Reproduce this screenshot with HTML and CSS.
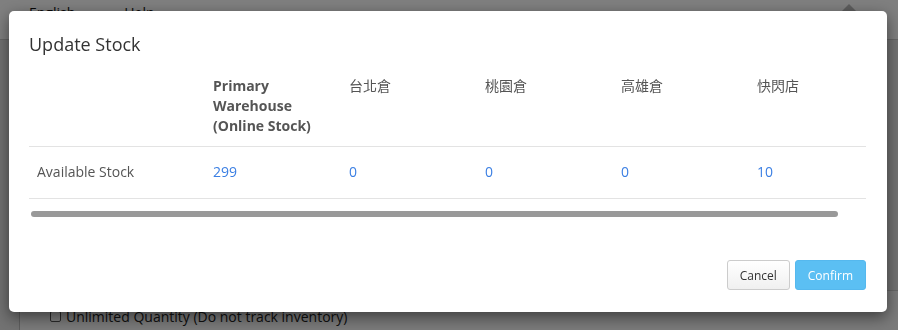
FILE: index.html
```html
<!DOCTYPE html>
<html>
<head>
  <title>Update Stock</title>
  <link rel="stylesheet" href="styles.css">
</head>
<body>
  <div class="page">
    <div class="topbar">
      <span class="topbar-link">English</span>
      <span class="topbar-link">Help</span>
      <span class="topbar-caret"></span>
    </div>
    <div class="page-main">
      <div class="panel">
        <label class="check-row"><span class="check-box"></span>Unlimited Quantity (Do not track inventory)</label>
      </div>
    </div>
  </div>

  <div class="backdrop"></div>

  <div class="modal-wrap">
    <div class="modal">
      <div class="modal-header">
        <h4 class="modal-title">Update Stock</h4>
      </div>
      <div class="modal-body">
        <div class="table-scroll">
          <table class="stock-table">
            <thead>
              <tr>
                <th class="col-label"></th>
                <th>Primary Warehouse (Online Stock)</th>
                <th class="cjk">台北倉</th>
                <th class="cjk">桃園倉</th>
                <th class="cjk">高雄倉</th>
                <th class="cjk">快閃店</th>
              </tr>
            </thead>
            <tbody>
              <tr>
                <td class="col-label">Available Stock</td>
                <td><a class="qty">299</a></td>
                <td><a class="qty">0</a></td>
                <td><a class="qty">0</a></td>
                <td><a class="qty">0</a></td>
                <td><a class="qty">10</a></td>
              </tr>
            </tbody>
          </table>
        </div>
        <div class="scroll-track">
          <div class="scroll-thumb"></div>
        </div>
      </div>
      <div class="modal-footer">
        <button class="btn btn-default">Cancel</button>
        <button class="btn btn-primary">Confirm</button>
      </div>
    </div>
  </div>
</body>
</html>
```

FILE: styles.css
```css
html, body {
  margin: 0;
  height: 100%;
  overflow: hidden;
}
body {
  font-family: "Open Sans", "Noto Sans CJK TC", sans-serif;
  font-size: 14px;
  color: #333;
  background: #e4e4e4;
}

/* page behind the dialog */
.page {
  height: 100%;
  display: flex;
  flex-direction: column;
  overflow: hidden;
}
.topbar {
  height: 39px;
  flex-shrink: 0;
  background: #fff;
  border-bottom: 1px solid #ccc;
  display: flex;
  align-items: flex-start;
  padding-left: 29px;
  gap: 49px;
}
.topbar-link {
  color: #111;
  font-size: 14px;
  line-height: 20px;
  margin-top: 3px;
}
.topbar-caret {
  margin-left: auto;
  margin-right: 42px;
  margin-top: 4px;
  width: 0;
  height: 0;
  border-left: 7px solid transparent;
  border-right: 7px solid transparent;
  border-bottom: 7px solid #bbb;
}
.page-main {
  flex-grow: 1;
  min-height: 0;
  display: flex;
  flex-direction: column;
  padding: 250px 0 0 19px;
}
.panel {
  flex-grow: 1;
  background: #f4f4f4;
  border-left: 1px solid #bbb;
  border-top: 1px solid #ccc;
  padding: 16px 0 0 30px;
}
.check-row {
  display: flex;
  align-items: center;
  gap: 5px;
  color: #222;
  font-size: 14px;
}
.check-box {
  width: 9px;
  height: 9px;
  border: 1px solid #555;
  border-radius: 2px;
  background: #fff;
}

/* dialog */
.backdrop {
  position: fixed;
  top: 0;
  left: 0;
  right: 0;
  bottom: 0;
  background: rgba(0, 0, 0, 0.5);
}
.modal-wrap {
  position: fixed;
  top: 0;
  left: 0;
  right: 0;
  bottom: 0;
  padding: 11px 11px 0 9px;
}
.modal {
  background: #fff;
  border-radius: 5px;
  box-shadow: 0 5px 15px rgba(0, 0, 0, 0.5);
  height: 301px;
  box-sizing: border-box;
}
.modal-header {
  padding: 20px 20px 11px;
}
.modal-title {
  margin: 0;
  font-size: 18px;
  font-weight: normal;
  line-height: 26px;
  color: #333;
}
.modal-body {
  padding: 0 21px 0 20px;
}
.table-scroll {
  overflow: hidden;
}
.stock-table {
  border-collapse: collapse;
  table-layout: fixed;
  width: 856px;
}
.stock-table th,
.stock-table td {
  width: 120px;
  text-align: left;
  vertical-align: top;
  line-height: 20px;
}
.stock-table th {
  padding: 8px 8px 10px;
  font-weight: bold;
  color: #555;
  border-bottom: 1px solid #e3e3e3;
}
.stock-table th.cjk {
  font-weight: normal;
  color: #555;
}
.stock-table td {
  padding: 15px 8px 16px;
  color: #555;
  border-bottom: 1px solid #e3e3e3;
}
.stock-table .col-label {
  width: 160px;
}
.qty {
  color: #3b7fe3;
  cursor: pointer;
}
.scroll-track {
  margin-top: 12px;
  height: 6px;
  padding-left: 2px;
}
.scroll-thumb {
  width: 807px;
  height: 6px;
  border-radius: 3px;
  background: #999;
}
.modal-footer {
  display: flex;
  justify-content: flex-end;
  gap: 5px;
  padding: 43px 21px 0 20px;
}
.btn {
  font-family: "Open Sans", sans-serif;
  font-size: 12px;
  height: 30px;
  padding: 0 12px;
  border-radius: 3px;
  border: 1px solid #ccc;
  cursor: pointer;
}
.btn-default {
  background: linear-gradient(#fff, #f0f0f0);
  color: #333;
}
.btn-primary {
  background: #5bbff3;
  border-color: #55b8ee;
  color: #fff;
}
```
